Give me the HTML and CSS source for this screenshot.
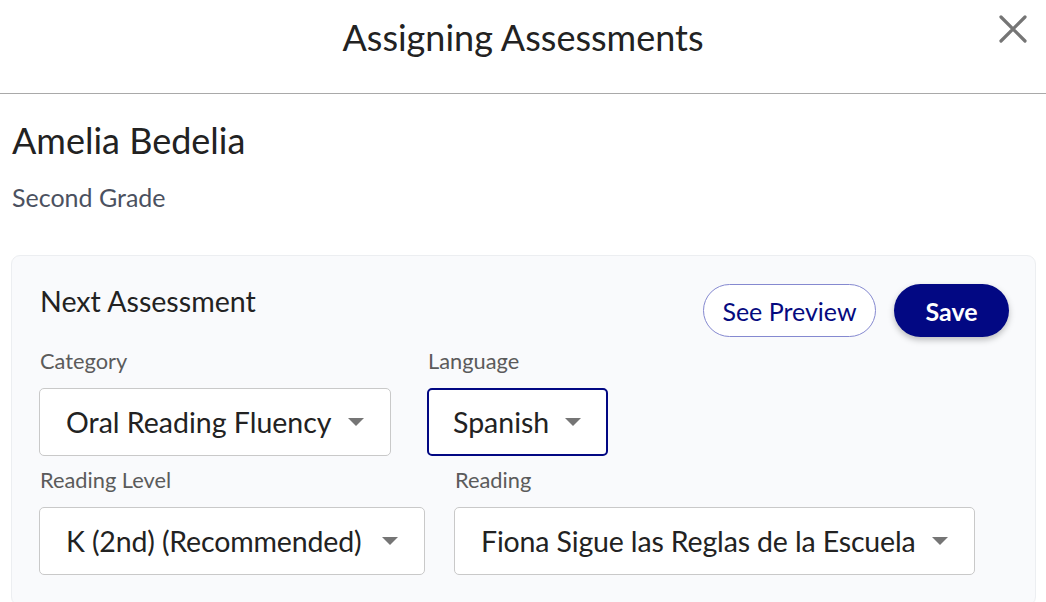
FILE: index.html
```html
<!DOCTYPE html>
<html>
<head>
<meta charset="utf-8">
<link rel="stylesheet" href="styles.css">
</head>
<body>
<div class="modal">
  <header class="header">
    <h1 class="title">Assigning Assessments</h1>
    <button class="close" aria-label="Close">
      <svg width="28" height="28" viewBox="0 0 28 28"><path d="M2 2 L26 26 M26 2 L2 26" stroke="#757575" stroke-width="3.2" stroke-linecap="round"/></svg>
    </button>
  </header>
  <section class="student">
    <h2 class="name">Amelia Bedelia</h2>
    <p class="grade">Second Grade</p>
  </section>
  <section class="card">
    <div class="card-top">
      <h3 class="card-title">Next Assessment</h3>
      <div class="actions">
        <button class="btn btn-outline">See Preview</button>
        <button class="btn btn-primary">Save</button>
      </div>
    </div>
    <div class="row row1">
      <div class="field f-cat">
        <label class="label">Category</label>
        <div class="select"><span>Oral Reading Fluency</span><i class="caret"></i></div>
      </div>
      <div class="field f-lang">
        <label class="label">Language</label>
        <div class="select focused"><span>Spanish</span><i class="caret"></i></div>
      </div>
    </div>
    <div class="row row2">
      <div class="field f-level">
        <label class="label">Reading Level</label>
        <div class="select"><span class="narrow">K (2nd) (Recommended)</span><i class="caret"></i></div>
      </div>
      <div class="field f-reading">
        <label class="label">Reading</label>
        <div class="select"><span class="narrow">Fiona Sigue las Reglas de la Escuela</span><i class="caret"></i></div>
      </div>
    </div>
  </section>
</div>
</body>
</html>
```
FILE: styles.css
```css
* { box-sizing: border-box; }
html, body { margin: 0; padding: 0; background: #fff; }
body {
  font-family: Lato, "Noto Sans", sans-serif;
  color: #222;
  width: 1046px;
  height: 602px;
  overflow: hidden;
}
.modal { height: 602px; overflow: hidden; }
.header {
  height: 94px;
  border-bottom: 1px solid #a9a9a9;
  display: flex;
  align-items: center;
  justify-content: center;
  position: relative;
}
.title {
  margin: 0;
  font-weight: 400;
  font-size: 36px;
  line-height: 44px;
  color: #222;
  padding-bottom: 20px;
}
.close {
  position: absolute;
  right: 19px;
  top: 15px;
  background: none;
  border: 0;
  padding: 0;
  width: 28px;
  height: 28px;
  cursor: pointer;
}
.close svg { display: block; }
.student { padding: 24px 12px 0; }
.name {
  margin: 0;
  font-weight: 400;
  font-size: 36px;
  line-height: 44px;
  color: #222;
}
.grade {
  margin: 20px 0 0;
  font-size: 25px;
  line-height: 30px;
  color: #4b5160;
}
.card {
  margin: 43px 10px 0 11px;
  background: #f9fafc;
  border: 1px solid #eceef1;
  border-radius: 9px;
  padding: 28px 26px 30px 27px;
}
.card-top {
  display: flex;
  justify-content: space-between;
  align-items: flex-start;
}
.card-title {
  margin: 0;
  padding-left: 1px;
  font-weight: 400;
  font-size: 28.6px;
  line-height: 35px;
  color: #222;
}
.actions {
  display: flex;
  gap: 18px;
}
.btn {
  font-family: Lato, "Noto Sans", sans-serif;
  font-size: 25px;
  height: 53px;
  border-radius: 27px;
  padding: 0;
  cursor: pointer;
}
.btn-outline {
  background: #fff;
  border: 1px solid #8589d0;
  color: #050a7f;
  width: 173px;
}
.btn-primary {
  background: #020883;
  border: 0;
  color: #fff;
  width: 115px;
  font-weight: 700;
  box-shadow: 0 3px 6px rgba(0, 0, 0, 0.25);
}
.row { display: flex; }
.field { display: flex; flex-direction: column; }
.label {
  font-size: 21.8px;
  line-height: 26px;
  color: #5b5b5b;
  margin-bottom: 14px;
  padding-left: 1px;
}
.select {
  background: #fff;
  border: 1px solid #c9c9c9;
  border-radius: 5px;
  height: 68px;
  display: flex;
  align-items: center;
  justify-content: space-between;
  padding: 0 26px 0 26px;
  font-size: 28.5px;
  color: #222;
  white-space: nowrap;
}
.select.focused { border: 2px solid #020883; padding-left: 24px; padding-right: 25px; }
.caret {
  width: 0; height: 0;
  border-left: 8px solid transparent;
  border-right: 8px solid transparent;
  border-top: 8px solid #757575;
  margin-left: 10px;
  flex: none;
}
.narrow { letter-spacing: -0.15px; }
.row1 { margin-top: 11px; gap: 36px; }
.f-cat { width: 352px; }
.f-lang { width: 181px; }
.row2 { margin-top: 11px; gap: 29px; }
.f-level { width: 386px; }
.f-reading { width: 521px; }
```
